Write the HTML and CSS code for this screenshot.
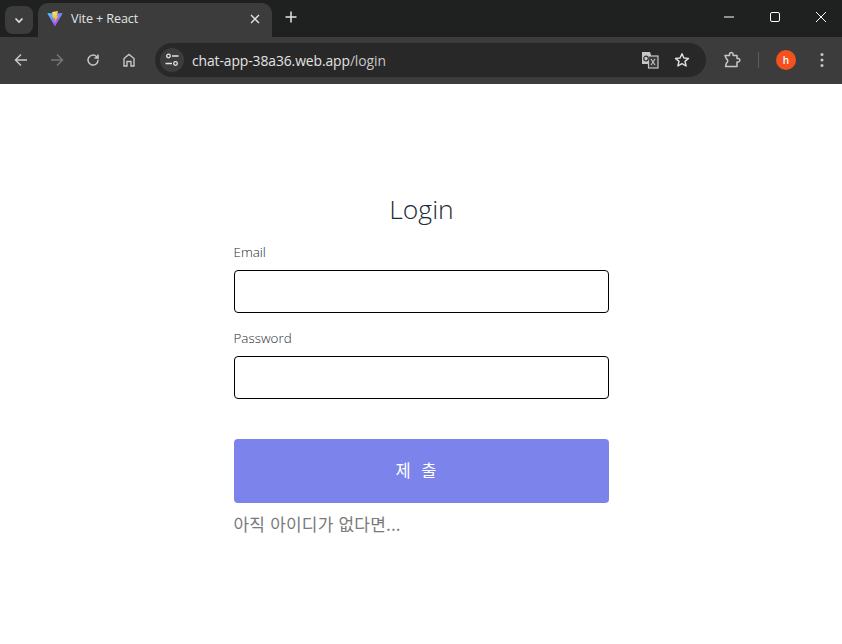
FILE: index.html
```html
<!DOCTYPE html>
<html lang="ko">
<head>
<meta charset="utf-8">
<title>Vite + React</title>
<link rel="stylesheet" href="styles.css">
</head>
<body>
<div class="browser">
  <div class="tabstrip">
    <button class="tabsearch"><svg width="12" height="12" viewBox="0 0 12 12"><path d="M2.5 4.5 6 8l3.5-3.5" fill="none" stroke="#e3e3e3" stroke-width="1.6"/></svg></button>
    <div class="tab">
      <svg class="favicon" width="16" height="16" viewBox="0 0 16 16">
        <defs>
          <linearGradient id="v1" x1="0" y1="0" x2="0.7" y2="1"><stop offset="0" stop-color="#41d1ff"/><stop offset="1" stop-color="#bd34fe"/></linearGradient>
          <linearGradient id="v2" x1="0" y1="0" x2="0.3" y2="1"><stop offset="0" stop-color="#ffea83"/><stop offset="1" stop-color="#ffa800"/></linearGradient>
        </defs>
        <path d="M0.3 2.2 15.7 2.2 8 15.5Z" fill="url(#v1)"/>
        <path d="M5.2 1 11 0 9.7 5 11.4 4.6 7.4 12 8 7 6 7.5Z" fill="url(#v2)"/>
      </svg>
      <span class="tabtitle">Vite + React</span>
      <svg class="tabclose" width="10" height="10" viewBox="0 0 10 10"><path d="M1 1l8 8M9 1l-8 8" stroke="#e3e3e3" stroke-width="1.4"/></svg>
    </div>
    <svg class="newtab" width="12" height="12" viewBox="0 0 12 12"><path d="M6 0.5v11M0.5 6h11" stroke="#e3e3e3" stroke-width="1.5"/></svg>
    <div class="winctl">
      <svg width="12" height="12" viewBox="0 0 12 12"><path d="M1 6h10" stroke="#fff" stroke-width="1"/></svg>
      <svg width="12" height="12" viewBox="0 0 12 12"><rect x="1.5" y="1.5" width="9" height="9" rx="1.5" fill="none" stroke="#fff" stroke-width="1"/></svg>
      <svg width="12" height="12" viewBox="0 0 12 12"><path d="M1 1l10 10M11 1 1 11" stroke="#fff" stroke-width="1"/></svg>
    </div>
  </div>
  <div class="toolbar">
    <svg class="tool" width="16" height="16" viewBox="0 0 16 16"><path d="M14 8H2.5M8 2.5 2.5 8 8 13.5" fill="none" stroke="#c7c7c7" stroke-width="1.5"/></svg>
    <svg class="tool" width="16" height="16" viewBox="0 0 16 16"><path d="M2 8h11.5M8 2.5 13.5 8 8 13.5" fill="none" stroke="#777" stroke-width="1.5"/></svg>
    <svg class="tool" width="16" height="16" viewBox="0 0 16 16"><path d="M13 8a5 5 0 1 1-1.500-3.500L13 6V2.500M13 6H9.500" fill="none" stroke="#c7c7c7" stroke-width="1.5"/></svg>
    <svg class="tool" width="16" height="16" viewBox="0 0 16 16"><path d="M3 14V6.500L8 2.500l5 4V14h-3V9.500H6V14Z" fill="none" stroke="#c7c7c7" stroke-width="1.4"/></svg>
    <div class="omnibox">
      <span class="siteinfo"><svg width="16" height="16" viewBox="0 0 16 16"><g fill="none" stroke="#e3e3e3" stroke-width="1.3"><circle cx="4.500" cy="4" r="1.800"/><circle cx="11.500" cy="11.500" r="1.800"/><path d="M8 4h6.500M1.500 11.500H8"/></g></svg></span>
      <span class="url">chat-app-38a36.web.app<span class="urlpath">/login</span></span>
      <svg class="translate" width="18" height="18" viewBox="0 0 18 18"><path d="M1 1h8l1 3v9H1Z" fill="#c7c7c7"/><rect x="7.500" y="5" width="9.500" height="12" fill="#3a3a3a" stroke="#c7c7c7" stroke-width="1.2"/><circle cx="5" cy="7.500" r="2.300" fill="none" stroke="#333" stroke-width="1.2"/><path d="m10 8 4 6M14 8l-4 6" stroke="#c7c7c7" stroke-width="1.1"/></svg>
      <svg class="star" width="16" height="16" viewBox="0 0 16 16"><path d="M8 1.700 9.900 6l4.600.4-3.500 3 1.100 4.600L8 11.600 3.900 14 5 9.400l-3.500-3L6.100 6Z" fill="none" stroke="#e3e3e3" stroke-width="1.4" stroke-linejoin="round"/></svg>
    </div>
    <svg class="ext" width="18" height="18" viewBox="0 0 18 18"><path d="M2 4.500H6.500V3.200a1.800 1.800 0 0 1 3.600 0V4.500H14V7.500h1a1.800 1.800 0 0 1 0 3.600H14V15.500H2.500L3.500 12a2.200 2.200 0 0 0 0-4L2 4.500Z" fill="none" stroke="#c7c7c7" stroke-width="1.5" stroke-linejoin="round"/></svg>
    <span class="divider"></span>
    <span class="avatar">h</span>
    <svg class="menu" width="4" height="16" viewBox="0 0 4 16"><circle cx="2" cy="2.500" r="1.500" fill="#c7c7c7"/><circle cx="2" cy="8" r="1.500" fill="#c7c7c7"/><circle cx="2" cy="13.500" r="1.500" fill="#c7c7c7"/></svg>
  </div>
  <main class="page">
    <form class="login">
      <h1 class="heading">Login</h1>
      <label class="label" for="email">Email</label>
      <input class="field" id="email" type="email">
      <label class="label" for="password">Password</label>
      <input class="field" id="password" type="password">
      <button class="submit" type="button">제 출</button>
      <a class="signup">아직 아이디가 없다면...</a>
    </form>
  </main>
</div>
</body>
</html>
```
FILE: styles.css
```css
* { box-sizing: border-box; }
html, body { margin: 0; height: 100%; }
body { font-family: "Open Sans", "Noto Sans CJK KR", sans-serif; background: #fff; overflow: hidden; }
.browser { width: 842px; height: 644px; display: flex; flex-direction: column; }

.tabstrip { height: 37px; background: #1f2020; display: flex; align-items: flex-end; flex: none; }
.tabsearch { width: 28px; height: 28px; margin: 0 0 3px 5px; border: 0; padding: 0; border-radius: 8px; background: #3c3c3c; display: flex; align-items: center; justify-content: center; }
.tab { width: 234px; height: 34px; margin-left: 5px; background: #3c3c3c; border-radius: 10px 10px 0 0; display: flex; align-items: center; padding: 0 12px 3px 9px; }
.favicon { flex: none; }
.tabtitle { flex: 1; margin-left: 8px; font: 12.6px "Open Sans", sans-serif; color: #e3e3e3; letter-spacing: -0.1px; }
.newtab { margin: 0 0 14px 13px; flex: none; }
.winctl { margin-left: auto; display: flex; gap: 34px; padding: 0 15px 14px 0; }

.toolbar { height: 47px; background: #3c3c3c; display: flex; align-items: center; padding: 0 0 1px 13px; flex: none; }
.tool { margin-right: 20px; flex: none; }
.omnibox { width: 551px; height: 34px; margin-left: -2px; background: #282828; border-radius: 17px; display: flex; align-items: center; padding: 0 16px 0 5px; }
.siteinfo { width: 24px; height: 24px; border-radius: 50%; background: #3c3c3c; display: flex; align-items: center; justify-content: center; flex: none; }
.url { margin-left: 8px; font: 13.9px "Open Sans", sans-serif; color: #e3e3e3; flex: 1; letter-spacing: -0.1px; }
.urlpath { color: #c7c7c7; }
.translate { margin-right: 15px; flex: none; }
.star { flex: none; }
.ext { margin-left: 17px; flex: none; }
.divider { width: 1px; height: 16px; background: #5e5e5e; margin-left: 17px; flex: none; }
.avatar { width: 20px; height: 20px; margin-left: 17px; border-radius: 50%; background: #f4511e; color: #fff; font: 600 10px/20px "Open Sans", sans-serif; text-align: center; flex: none; }
.menu { margin-left: 24px; flex: none; }

.page { flex: 1; display: flex; justify-content: center; background: #fff; }
.login { width: 375px; margin-top: 108px; display: flex; flex-direction: column; align-items: stretch; }
.heading { margin: 0 0 16px; padding-left: 1px; font: 300 26.5px/34px "Open Sans", sans-serif; color: #1c2a36; text-align: center; }
.label { font: 300 13.4px/18px "Open Sans", sans-serif; color: #1c2a36; margin-bottom: 9px; padding-top: 1px; height: 19px; }
.field { height: 43px; border: 1px solid #000; border-radius: 4px; background: #fff; margin-bottom: 15px; padding: 0 8px; }
.submit { height: 64px; margin-top: 25px; border: 0; border-radius: 4px; padding: 0 8px 2px 0; background: #7c84ec; color: #fff; font: 400 16.5px "Noto Sans CJK KR", sans-serif; letter-spacing: 2px; word-spacing: 2px; }
.signup { margin-top: 9px; font: 400 17px/24px "Noto Sans CJK KR", sans-serif; color: #7a7a7a; letter-spacing: .2px; }
```
